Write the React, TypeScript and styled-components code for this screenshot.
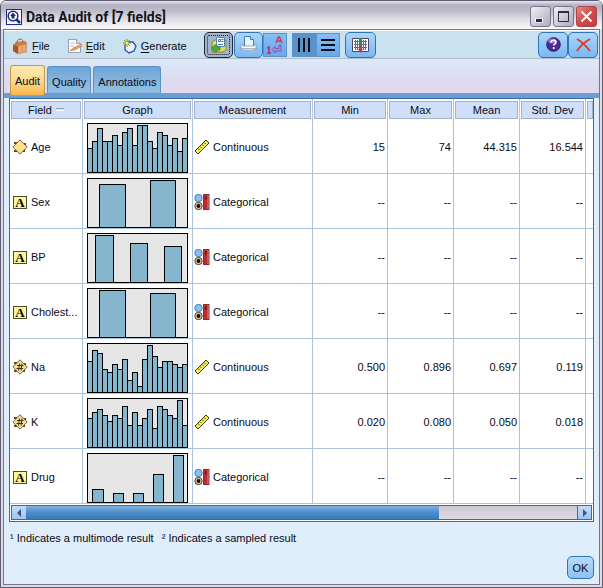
import React from "react";
import styled, { createGlobalStyle, css } from "styled-components";

const GlobalStyle = createGlobalStyle`
  * { box-sizing: border-box; }
  body {
    margin: 0;
    background: #ffffff;
    font: 11px/14px "Liberation Sans", Arial, sans-serif;
    color: #0a0a14;
  }
  button { font: inherit; color: inherit; padding: 0; cursor: default; }
`;

const Window = styled.main`
  display: flex;
  flex-direction: column;
  min-height: 100vh;
  border: 1px solid #5f5b70;
  border-radius: 6px 6px 0 0;
  background: #dcdae6;
  padding: 0 2px 2px;
  overflow: hidden;
`;

const TitleBar = styled.header`
  display: flex;
  align-items: center;
  gap: 4px;
  height: 28px;
  margin: 0 -2px;
  padding: 3px 5px 0;
  background: linear-gradient(#e9e8ee 0, #b3b2c3 4px, #bdbccb 10px, #dddde5 18px, #f8f8fa 27px);
`;

const Title = styled.h1`
  flex: 1;
  margin: 0;
  font: bold 14px/16px Roboto, "Open Sans", sans-serif;
  color: #14141c;
`;

const WindowButton = styled.button<{ $close?: boolean }>`
  display: grid;
  place-items: center;
  width: 21px;
  height: 21px;
  border: 1px solid ${(p) => (p.$close ? "#a8454d" : "#77758c")};
  border-radius: 3px;
  background: ${(p) =>
    p.$close
      ? "linear-gradient(135deg, #e58a84, #cf4c48 50%, #c23c40)"
      : "linear-gradient(135deg, #f2f2f6, #c9c8d6 55%, #aeadc0)"};
`;

const WindowButtons = styled.div`
  display: flex;
  gap: 2px;
`;

const Body = styled.div`
  display: flex;
  flex: 1;
  flex-direction: column;
  border: 1px solid #77748a;
  background: #e0eefb;
`;

const Toolbar = styled.div`
  display: flex;
  align-items: center;
  height: 29px;
  padding: 0 1px 0 8px;
  border-top: 1px solid #ffffff;
  border-bottom: 1px solid #b4bcc8;
  background: #cae1f0;
`;

const Menu = styled.nav`
  display: flex;
  gap: 17px;
  width: 192px;
`;

const MenuButton = styled.button`
  display: flex;
  align-items: center;
  gap: 4px;
  border: 0;
  background: none;
  white-space: nowrap;
  padding-top: 2px;
  u { text-underline-offset: 2px; }
`;

const Spacer = styled.span<{ $size?: number }>`
  flex: ${(p) => (p.$size ? `0 0 ${p.$size}px` : "1")};
`;

const ToolButton = styled.button<{ $width?: number; $square?: boolean; $active?: boolean; $focused?: boolean }>`
  display: grid;
  place-items: center;
  width: ${(p) => p.$width ?? 29}px;
  height: ${(p) => (p.$square ? 24 : 26)}px;
  border: 1px solid ${(p) => (p.$square ? "#5b93cd" : "#2f74b8")};
  border-radius: ${(p) => (p.$square ? 0 : 5)}px;
  background: ${(p) =>
    p.$active ? "#5a92ca" : p.$square ? "linear-gradient(#86bdf3, #68a8ea)" : "linear-gradient(#aed6f8, #7ab8f3)"};
  ${(p) =>
    p.$focused &&
    css`
      border: 1px solid #23232c;
      background: #9fb6d2;
      outline: 1px dotted #16161c;
      outline-offset: -4px;
    `}
`;

const Tabs = styled.div`
  display: flex;
  align-items: flex-end;
  gap: 2px;
  height: 34px;
  padding: 0 6px;
  background: linear-gradient(#dde9f8, #dcdcef 60%, #e3d7ee);
`;

const Tab = styled.button<{ $selected?: boolean }>`
  height: ${(p) => (p.$selected ? 31 : 27)}px;
  margin-bottom: ${(p) => (p.$selected ? -3 : 0)}px;
  padding: ${(p) => (p.$selected ? "0 4px" : "5px 4px 0")};
  border: 1px solid ${(p) => (p.$selected ? "#c09a50" : "#5b93c6")};
  border-bottom-color: ${(p) => (p.$selected ? "#d59a30" : "#86b4dc")};
  border-radius: ${(p) => (p.$selected ? "3px" : "3px 3px 0 0")};
  background: ${(p) =>
    p.$selected ? "linear-gradient(#fdeab4, #fbd98c 50%, #f8b74c)" : "linear-gradient(#6fa5d5, #86b6de 60%, #92c0e4)"};
  z-index: 1;
`;

const Strip = styled.div`
  height: 5px;
  background: #6c9fd0;
`;

const Pane = styled.section`
  margin: 0 5px;
  border: 1px solid #2f6ea8;
  background: #ffffff;
`;

const TableClip = styled.div`
  overflow: hidden;
`;

const Table = styled.table`
  width: 100%;
  border-collapse: separate;
  border-spacing: 0;
  table-layout: fixed;
`;

const HeadCell = styled.th`
  height: 20px;
  padding: 1px 1px 0;
  font-weight: normal;
  white-space: nowrap;
  border-right: 1px solid #b8c4d8;
  &:last-child { border-right: 0; padding-right: 0; }
`;

const HeadLabel = styled.span`
  display: flex;
  align-items: center;
  justify-content: center;
  gap: 4px;
  height: 18px;
  border: 1px solid #a4b2c8;
  background: #cfdffa;
`;

const SortMark = styled.i`
  width: 8px;
  height: 3px;
  border-top: 1px solid #93a8cc;
  border-bottom: 1px solid #ffffff;
`;

const Cell = styled.td<{ $align?: "right" }>`
  height: 55px;
  padding: 2px 2px 0 1px;
  border-right: 1px solid #a9c4dc;
  border-bottom: 1px solid #a9c4dc;
  text-align: ${(p) => p.$align ?? "left"};
  white-space: nowrap;
  &:last-child { border-right: 0; }
`;

const GraphCell = styled(Cell)`
  padding: 4px 4px 0;
  vertical-align: top;
  svg { display: block; }
`;

const IconText = styled.span<{ $gap: number }>`
  display: flex;
  align-items: center;
  gap: ${(p) => p.$gap}px;
`;

const ScrollBar = styled.div`
  display: flex;
  height: 15px;
  margin: 1px;
  border: 1px solid #2f6ea8;
  background: linear-gradient(#cfc9d4, #dedae2);
`;

const ScrollButton = styled.button<{ $end?: boolean }>`
  display: grid;
  place-items: center;
  width: 14px;
  border: 0;
  ${(p) => p.$end && "border-left: 1px solid #2f6ea8;"}
  background: linear-gradient(#c4ddf8, #9cc6f2);
`;

const ScrollTrack = styled.div`
  flex: 1;
`;

const ScrollThumb = styled.div`
  width: 75%;
  height: 100%;
  background: linear-gradient(#7fb2e2, #4c8dcb 50%, #3679bd);
`;

const Notes = styled.p`
  display: flex;
  gap: 8px;
  margin: 0;
  padding: 9px 6px 0;
`;

const Footer = styled.footer`
  display: flex;
  justify-content: flex-end;
  margin-top: auto;
  padding: 0 5px 5px;
`;

const OkButton = styled.button`
  width: 27px;
  height: 23px;
  border: 1px solid #2f74b8;
  border-radius: 5px;
  background: linear-gradient(#b8dafa, #8dc0f4);
`;

const TitleIcon = () => (
  <svg width="16" height="16" viewBox="0 0 16 16">
    <rect x="0.5" y="0.5" width="15" height="15" fill="#f4f7ff" stroke="#1c2f78" />
    <path d="M10 10l4 4" stroke="#1c2f78" strokeWidth="2.500" />
    <circle cx="7" cy="7" r="4.800" fill="#fff" stroke="#1c2f78" strokeWidth="1.500" />
    <path d="M7 3.500L10 7H8.500v2.500h-3V7H4z" fill="#1c2f78" />
  </svg>
);

const FileIcon = () => (
  <svg width="16" height="16" viewBox="0 0 16 16">
    <path d="M1 7l3-3 9-1 2 2v9l-9 2-5-3z" fill="#c97b45" />
    <path d="M1 7l5 1 9-2v8l-9 2-5-3z" fill="#dd9a64" />
    <path d="M1 7l5 1v8l-5-3z" fill="#a5562c" />
    <path d="M5 5c0-5 6-5 6-1" fill="none" stroke="#9a5b34" />
    <path d="M8 8v6M12 7v6" stroke="#efc19a" />
  </svg>
);

const EditIcon = () => (
  <svg width="15" height="16" viewBox="0 0 15 16">
    <path d="M1.500 1.500h8l4 4v9h-12z" fill="#fff" stroke="#98a0b0" />
    <path d="M9.500 1.500v4h4" fill="#d8dfea" stroke="#98a0b0" />
    <path d="M3 5h5M3 8h4" stroke="#b5bfd0" />
    <path d="M3 13l3-3 8-4 1 2-7 4z" fill="#e9a35c" stroke="#b8743a" strokeWidth=".5" />
  </svg>
);

const GenerateIcon = () => (
  <svg width="15" height="16" viewBox="0 0 15 16">
    <path d="M6 4h5l3 4-2 5-5 2-4-3v-5z" fill="#edf4ff" stroke="#3454b4" strokeWidth="1.400" />
    <path d="M5 1v8M1 5h8M2 2l6 6M8 2l-6 6" stroke="#7f8a12" />
    <circle cx="5" cy="5" r="1.500" fill="#f8ee3c" />
  </svg>
);

const SaveOutputIcon = () => (
  <svg width="16" height="16" viewBox="0 0 16 16">
    <path d="M1 5l3-2h11v10l-3 2H1z" fill="#e6dc60" stroke="#8a8420" />
    <path d="M5.500.5h8v9h-8z" fill="#fff" stroke="#5585a8" />
    <path d="M7.500 2.500h2v2h-2zM10.500 2.500h2M10.500 4.500h2M7 7.500h5" stroke="#3c78b0" fill="none" />
    <path d="M3 8h3v2h3v3H6v2H3v-2H1v-3h2z" fill="#4fae38" stroke="#2c7a20" strokeWidth=".6" />
  </svg>
);

const PrintIcon = () => (
  <svg width="17" height="17" viewBox="0 0 17 17">
    <path d="M4.500.5h6l3 3v7h-9z" fill="#e9f6ff" stroke="#3a86c4" />
    <path d="M10.500.5v3h3" fill="#a8d8f8" stroke="#3a86c4" />
    <path d="M1 9l2-1v2h11V8l2 1v5H1z" fill="#fff" stroke="#6c8eaa" strokeWidth=".7" />
    <path d="M1 12h15v2l-2 2H3l-2-2z" fill="#a9b8c6" />
    <path d="M4 13.500h9" stroke="#f2d978" />
  </svg>
);

const LabelsIcon = () => (
  <svg width="18" height="18" viewBox="0 0 18 18" fill="none">
    <path d="M10 7l2.500-6h1L16 7M11 5h4" stroke="#d43458" strokeWidth="1.400" />
    <path d="M1 12l2-1v6M1 17h4" stroke="#c02c68" strokeWidth="1.500" />
    <path d="M6 13.500l3-3v2h4V9h2v6H9v2z" fill="#a88cd8" stroke="#7650b0" strokeWidth=".8" />
  </svg>
);

const LinesIcon = ({ vertical }: { vertical?: boolean }) => (
  <svg width="14" height="14" viewBox="0 0 14 14">
    <path
      d={vertical ? "M2 0v14M7 0v14M12 0v14" : "M0 2h14M0 7h14M0 12h14"}
      stroke="#0a0e1a"
      strokeWidth="2"
    />
  </svg>
);

const ColumnsIcon = () => (
  <svg width="17" height="16" viewBox="0 0 17 16">
    <path d="M.5 1.500h16v13H.5z" fill="#fff" stroke="#4a4a68" />
    <path d="M2 4.500h5M2 7.500h5M2 10.500h5M10 4.500h5M10 7.500h5M10 10.500h5M3.500 3v10M5.500 3v10M11.500 3v10M13.500 3v10" stroke="#66688c" />
    <path d="M7 1h3v7H7z" fill="#2f8a58" />
    <path d="M7 8h3v4h1l-2.500 4L6 12h1z" fill="#c8324c" />
  </svg>
);

const HelpIcon = () => (
  <svg width="15" height="15" viewBox="0 0 15 15">
    <circle cx="7.500" cy="7.500" r="6.800" fill="#4d2a94" stroke="#2f1766" />
    <ellipse cx="6" cy="4" rx="4" ry="2.500" fill="#8f74c8" />
    <path d="M5.200 5.500c0-3 4.800-3 4.800-.2 0 1.700-2.300 1.500-2.300 3.300M7.700 10v2" fill="none" stroke="#fff" strokeWidth="1.700" />
  </svg>
);

const CrossIcon = () => (
  <svg width="15" height="14" viewBox="0 0 15 14">
    <path d="M1 1c5 3 9 7 13 12M14 1C9 4 4 8 1 13" fill="none" stroke="#dc3a2c" strokeWidth="1.800" />
  </svg>
);

const MinimizeIcon = () => (
  <svg width="13" height="13" viewBox="0 0 13 13">
    <path d="M1 10.500h8" stroke="#fff" strokeWidth="4" />
    <path d="M2 10.500h6" stroke="#2c2c3a" strokeWidth="3" />
  </svg>
);

const MaximizeIcon = () => (
  <svg width="13" height="13" viewBox="0 0 13 13">
    <path d="M1.500 1.500h10v10h-10z" fill="none" stroke="#2c2c3a" />
    <path d="M1 2h11" stroke="#2c2c3a" strokeWidth="2" />
  </svg>
);

const CloseIcon = () => (
  <svg width="13" height="13" viewBox="0 0 13 13">
    <path d="M1.500 1.500l10 10M11.500 1.500l-10 10" stroke="#fff" strokeWidth="2" />
  </svg>
);

type FieldKind = "range" | "text" | "number";

const FieldIcon = ({ kind }: { kind: FieldKind }) =>
  kind === "text" ? (
    <svg width="17" height="15" viewBox="0 0 17 15">
      <rect x="2.500" y="1.500" width="13" height="12" fill="#fbf896" stroke="#4c4c28" />
      <text x="9" y="12" textAnchor="middle" fontFamily="Liberation Serif, serif" fontWeight="bold" fontSize="13" fill="#000">A</text>
    </svg>
  ) : (
    <svg width="17" height="16" viewBox="0 0 17 16">
      <path d="M3 3h3v2H3zM12 4h3v3h-3zM3 11h3v2H3zM11 10h3v3h-3z" fill="#5c4820" />
      <path d="M9 .8L16.200 8 9 15.200 1.800 8z" fill={kind === "range" ? "#fbe18c" : "#f3dc98"} stroke="#7c6230" />
      {kind === "number" && <path d="M8.500 4.500l-1 7M11 4.500l-1 7M6 6.500h6.500M5.500 9.500H12" stroke="#2a2210" strokeWidth=".9" />}
    </svg>
  );

const RulerIcon = () => (
  <svg width="16" height="16" viewBox="0 0 16 16">
    <path d="M1 12L12 1l3 3L4 15z" fill="#f4ee4c" stroke="#3a3a10" />
    <path d="M4 9.500l1.500 1.500M6 7.500l1.500 1.500M8 5.500l1.500 1.500M10 3.500l1.500 1.500" stroke="#3a3a10" strokeWidth=".9" />
  </svg>
);

const CategoryIcon = () => (
  <svg width="16" height="16" viewBox="0 0 16 16">
    <circle cx="4.500" cy="4" r="3.700" fill="#86c0f4" stroke="#3868a0" strokeWidth=".8" />
    <circle cx="4.500" cy="12" r="3.700" fill="#e2c49a" stroke="#2c2014" strokeWidth=".8" />
    <circle cx="4.500" cy="12" r="1.900" fill="#120c08" />
    <rect x="9.500" y=".5" width="5.500" height="15" fill="#bb2c30" stroke="#8a3034" />
    <path d="M11 2h2.500v3L11 6z" fill="#8c1216" />
    <path d="M14 1v14" stroke="#dc8080" />
  </svg>
);

const ArrowIcon = ({ right }: { right?: boolean }) => (
  <svg width="6" height="8" viewBox="0 0 6 8">
    <path d={right ? "M1 0l4 4-4 4z" : "M5 0L1 4l4 4z"} fill="#45507c" />
  </svg>
);

/* Each bar is [left, top, width] inside the 101 by 50 plot. */
type Bar = [number, number, number];

const histogram = (tops: number[]): Bar[] => tops.map((top, i) => [i * 5, top, 5]);

const Graph = ({ bars, name }: { bars: Bar[]; name: string }) => (
  <svg width="101" height="50" viewBox="0 0 101 50" shapeRendering="crispEdges" role="img" aria-label={`${name} distribution`}>
    <rect x="0.5" y="0.5" width="100" height="49" fill="#e6e6e6" stroke="#000" />
    {bars.map(([x, y, w]) => (
      <rect key={x} x={x + 0.5} y={y + 0.5} width={w} height={49 - y} fill="#86b6ce" stroke="#000" />
    ))}
  </svg>
);

type Field = { name: string; kind: FieldKind; bars: Bar[]; stats?: string[] };

const fields: Field[] = [
  {
    name: "Age",
    kind: "range",
    bars: histogram([25, 18, 5, 18, 18, 12, 22, 9, 5, 22, 2, 2, 18, 25, 9, 12, 22, 15, 28, 15]),
    stats: ["15", "74", "44.315", "16.544"],
  },
  { name: "Sex", kind: "text", bars: [[12, 6, 26], [63, 2, 25]] },
  { name: "BP", kind: "text", bars: [[8, 2, 18], [43, 10, 17], [77, 13, 17]] },
  { name: "Cholest...", kind: "text", bars: [[12, 2, 26], [63, 5, 25]] },
  {
    name: "Na",
    kind: "number",
    bars: histogram([18, 7, 10, 26, 29, 21, 26, 16, 37, 29, 43, 16, 2, 13, 24, 18, 18, 21, 24, 21]),
    stats: ["0.500", "0.896", "0.697", "0.119"],
  },
  {
    name: "K",
    kind: "number",
    bars: histogram([20, 14, 11, 17, 23, 17, 20, 8, 27, 14, 27, 20, 11, 30, 8, 11, 17, 20, 2, 27]),
    stats: ["0.020", "0.080", "0.050", "0.018"],
  },
  { name: "Drug", kind: "text", bars: [[5, 36, 11], [26, 40, 10], [46, 40, 10], [66, 21, 10], [86, 2, 10]] },
];

const columns = [
  { title: "Field", width: 73 },
  { title: "Graph", width: 110 },
  { title: "Measurement", width: 120 },
  { title: "Min", width: 75 },
  { title: "Max", width: 66 },
  { title: "Mean", width: 66 },
  { title: "Std. Dev", width: 66 },
];

export default function App() {
  return (
    <>
      <GlobalStyle />
      <Window>
        <TitleBar>
          <TitleIcon />
          <Title>Data Audit of [7 fields]</Title>
          <WindowButtons>
            <WindowButton aria-label="Minimize"><MinimizeIcon /></WindowButton>
            <WindowButton aria-label="Maximize"><MaximizeIcon /></WindowButton>
            <WindowButton $close aria-label="Close window"><CloseIcon /></WindowButton>
          </WindowButtons>
        </TitleBar>
        <Body>
          <Toolbar>
            <Menu>
              <MenuButton><FileIcon /><span><u>F</u>ile</span></MenuButton>
              <MenuButton><EditIcon /><span><u>E</u>dit</span></MenuButton>
              <MenuButton><GenerateIcon /><span><u>G</u>enerate</span></MenuButton>
            </Menu>
            <ToolButton $focused aria-label="Save output"><SaveOutputIcon /></ToolButton>
            <Spacer $size={1} />
            <ToolButton aria-label="Print"><PrintIcon /></ToolButton>
            <ToolButton $square $width={24} aria-label="Display labels"><LabelsIcon /></ToolButton>
            <Spacer $size={5} />
            <ToolButton $square $active $width={24} aria-label="Columns"><LinesIcon vertical /></ToolButton>
            <ToolButton $square $width={24} aria-label="Rows"><LinesIcon /></ToolButton>
            <Spacer $size={5} />
            <ToolButton $width={31} aria-label="Select statistics"><ColumnsIcon /></ToolButton>
            <Spacer />
            <ToolButton $width={30} aria-label="Help"><HelpIcon /></ToolButton>
            <ToolButton $width={30} aria-label="Close"><CrossIcon /></ToolButton>
          </Toolbar>
          <Tabs role="tablist">
            <Tab role="tab" aria-selected $selected>Audit</Tab>
            <Tab role="tab" aria-selected={false}>Quality</Tab>
            <Tab role="tab" aria-selected={false}>Annotations</Tab>
          </Tabs>
          <Strip />
          <Pane>
            <TableClip>
              <Table>
                <colgroup>
                  {columns.map((c) => <col key={c.title} width={c.width} />)}
                  <col />
                </colgroup>
                <thead>
                  <tr>
                    {columns.map((c, i) => (
                      <HeadCell key={c.title} scope="col">
                        <HeadLabel>{c.title}{i === 0 && <SortMark />}</HeadLabel>
                      </HeadCell>
                    ))}
                    <HeadCell as="td"><HeadLabel /></HeadCell>
                  </tr>
                </thead>
                <tbody>
                  {fields.map((f) => (
                    <tr key={f.name}>
                      <Cell><IconText $gap={3}><FieldIcon kind={f.kind} />{f.name}</IconText></Cell>
                      <GraphCell><Graph bars={f.bars} name={f.name} /></GraphCell>
                      <Cell>
                        <IconText $gap={3}>
                          {f.kind === "text" ? <CategoryIcon /> : <RulerIcon />}
                          {f.kind === "text" ? "Categorical" : "Continuous"}
                        </IconText>
                      </Cell>
                      {(f.stats ?? ["--", "--", "--", "--"]).map((s, i) => (
                        <Cell key={i} $align="right">{s}</Cell>
                      ))}
                      <Cell />
                    </tr>
                  ))}
                </tbody>
              </Table>
            </TableClip>
            <ScrollBar>
              <ScrollButton aria-label="Scroll left"><ArrowIcon /></ScrollButton>
              <ScrollTrack><ScrollThumb /></ScrollTrack>
              <ScrollButton $end aria-label="Scroll right"><ArrowIcon right /></ScrollButton>
            </ScrollBar>
          </Pane>
          <Notes>
            <span>¹ Indicates a multimode result</span>
            <span>² Indicates a sampled result</span>
          </Notes>
          <Footer>
            <OkButton>OK</OkButton>
          </Footer>
        </Body>
      </Window>
    </>
  );
}
